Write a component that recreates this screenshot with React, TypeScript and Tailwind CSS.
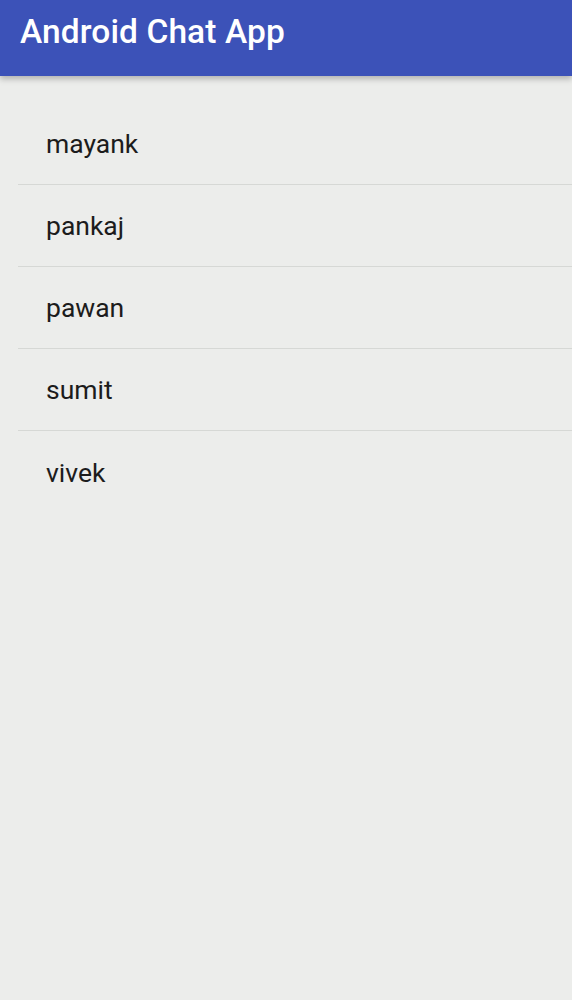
const users = ["mayank", "pankaj", "pawan", "sumit", "vivek"];

export default function App() {
  return (
    <div className="min-h-[1000px] bg-[#ecedeb] font-['Roboto',sans-serif]">
      <div className="h-[76px] bg-[#3c52b8] flex items-center px-5 shadow-[0_3px_6px_rgba(0,0,0,0.25)]">
        <h1 className="text-white text-[33.5px] font-medium leading-none pb-[13px] tracking-[0.1px]">Android Chat App</h1>
      </div>
      <div className="pt-[27px] pl-[18px]">
        {users.map((name, i) => (
          <div
            key={name}
            className={`h-[82px] flex items-center pl-[28px] ${i < users.length - 1 ? "border-b border-[#d6d8d5]" : ""}`}
          >
            <p className="text-[26.5px] text-[#1c1c1c] leading-none pt-[2px]">{name}</p>
          </div>
        ))}
      </div>
    </div>
  );
}
